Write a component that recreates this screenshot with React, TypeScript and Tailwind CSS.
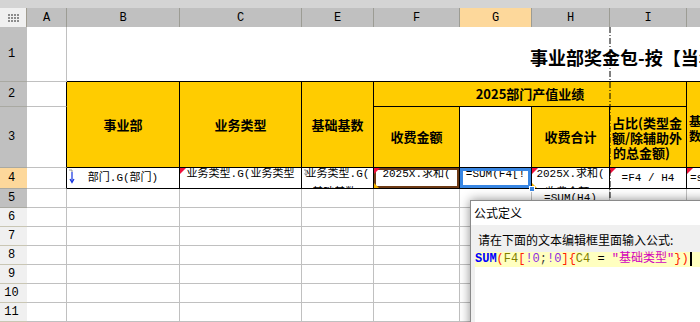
import React from "react";

const mono = "font-['Liberation_Mono','Noto_Sans_CJK_SC',monospace]";
const cjk = "font-['Noto_Sans_CJK_SC','Liberation_Sans',sans-serif]";

const headers = ["A", "B", "C", "E", "F", "G", "H", "I", "J"];

function RedMark() {
  return <span className="absolute left-0 top-0 w-0 h-0 border-t-[6px] border-r-[6px] border-t-[#f0103c] border-r-transparent" />;
}

function YellowMark() {
  return <span className="absolute left-0 bottom-0 w-0 h-0 border-b-[5px] border-r-[5px] border-b-[#f2b400] border-r-transparent" />;
}

function RowHead({ n, tone }: { n: number; tone: "gray" | "light" | "sel" }) {
  const bg = tone === "gray" ? "bg-[#c0c0c0] border-[#a9a9a2]" : tone === "sel" ? "bg-[#fdd89b] border-[#a9a9a2]" : "bg-[#f0f0f0] border-[#c9c6b4]";
  return (
    <div className={`border-b ${bg} flex items-center justify-center pr-[4px] text-[12px] text-black ${mono}`}>
      {n}
    </div>
  );
}

// a row-4 cell whose text wraps onto a second line that is mostly cut off
function Wrapped({ lines, children }: { lines: string[]; children?: React.ReactNode }) {
  return (
    <div className={`relative bg-white border-r border-b border-black overflow-hidden text-center text-[11px] whitespace-nowrap text-black ${mono}`}>
      {children}
      <div className="-mt-[3px] leading-[19px]">
        {lines.map((l, i) => (
          <div key={i}>{l}</div>
        ))}
      </div>
    </div>
  );
}

export default function App() {
  const yellow = `bg-[#ffcc00] border-r border-b border-black flex items-center justify-center font-bold text-[13px] text-black ${cjk}`;

  return (
    <div className="relative w-[700px] h-[322px] overflow-hidden bg-white">
      <div className="h-[8px] bg-[#d4d4d4]" />
      <div className="grid grid-cols-[27px_40px_113px_122px_72px_86px_72px_78px_77px_80px] grid-rows-[19px_55px_25px_61px_21px_19px_19px_19px_19px_19px_19px_19px]">
        {/* column headers */}
        <div className="bg-[#f0f0f0] border-r border-[#a09c90] flex items-center justify-center">
          <div className="grid grid-cols-4 gap-[1px]">
            {Array.from({ length: 12 }).map((_, i) => (
              <span key={i} className="w-[2px] h-[2px] bg-[#8c8c8c]" />
            ))}
          </div>
        </div>
        {headers.map((h) => (
          <div
            key={h}
            className={`border-r border-[#9c9c94] flex items-center justify-center text-[12px] text-black ${mono} ${
              h === "G" ? "bg-[#fdd89b]" : "bg-[#c0c0c0]"
            }`}
          >
            {h === "J" ? "" : h}
          </div>
        ))}

        {/* row 1 */}
        <RowHead n={1} tone="gray" />
        <div className="border-r border-b border-[#c0c0c0]" />
        <div className={`col-span-8 border-b border-black flex items-center pl-[463px] pt-[5px] whitespace-nowrap text-[18px] leading-none font-bold text-black overflow-hidden ${cjk}`}>
          事业部奖金包-按【当年】
        </div>

        {/* row 2 */}
        <RowHead n={2} tone="gray" />
        <div className="border-r border-b border-r-black border-b-[#c0c0c0]" />
        <div className={`row-span-2 ${yellow}`}>事业部</div>
        <div className={`row-span-2 ${yellow}`}>业务类型</div>
        <div className={`row-span-2 ${yellow}`}>基础基数</div>
        <div className={`col-span-4 ${yellow} pb-[1px]`}>2025部门产值业绩</div>
        <div className={`row-span-2 bg-[#ffcc00] border-b border-black overflow-hidden flex flex-col justify-center pl-[2px] pt-[6px] whitespace-nowrap font-bold text-[12px] leading-[15px] text-black ${cjk}`}>
          <div>基础基数</div>
          <div>数值比例</div>
        </div>

        {/* row 3 */}
        <RowHead n={3} tone="gray" />
        <div className="border-r border-b border-r-black border-b-[#c0c0c0]" />
        <div className={yellow}>收费金额</div>
        <div className="bg-white border-r border-b border-black" />
        <div className={yellow}>收费合计</div>
        <div className={`bg-[#ffcc00] border-r border-b border-black overflow-hidden flex flex-col justify-center pl-[2px] whitespace-nowrap font-bold text-[13px] leading-[15px] text-black ${cjk}`}>
          <div>占比(类型金</div>
          <div>额/除辅助外</div>
          <div className="pl-[1px]">的总金额)</div>
        </div>

        {/* row 4 */}
        <RowHead n={4} tone="sel" />
        <div className="border-r border-b border-r-black border-b-[#c0c0c0]" />
        <div className={`relative bg-white border-r border-b border-black flex items-center justify-center text-[11px] text-black ${mono}`}>
          <svg className="absolute left-[1px] top-[1px]" width="8" height="15" viewBox="0 0 8 15">
            <path d="M1 1 L4 1 L4 3" stroke="#909090" strokeWidth="1" fill="none" />
            <path d="M4 3 L4 13" stroke="#1030e0" strokeWidth="1.2" fill="none" />
            <path d="M2 10 L4 13.5 L6 10" stroke="#1030e0" strokeWidth="1.2" fill="none" />
          </svg>
          部门.G(部门)
        </div>
        <Wrapped lines={["业务类型.G(业务类型", ")"]}>
          <RedMark />
        </Wrapped>
        <Wrapped lines={["业务类型.G(", "基础基数)"]}>
          <svg className="absolute left-[1px] top-[1px]" width="6" height="8" viewBox="0 0 6 8">
            <path d="M1 1 L3 1 L3 6 M1.5 4.5 L3 6.5 L4.5 4.5" stroke="#8c8c8c" strokeWidth="1" fill="none" />
          </svg>
        </Wrapped>
        <Wrapped lines={["2025X.求和(", "收费金额)"]}>
          <span className="absolute inset-0 border-2 border-[#6e3b16]" />
          <RedMark />
          <YellowMark />
        </Wrapped>
        <Wrapped lines={["=SUM(F4[!", "0;!0]{C4"]}>
          <span className="absolute inset-0 border-[3px] border-[#3886e3]" />
        </Wrapped>
        <Wrapped lines={["2025X.求和(", "收费金额)"]}>
          <RedMark />
          <YellowMark />
        </Wrapped>
        <div className={`relative bg-white border-r border-b border-black flex items-center justify-center text-[11px] whitespace-nowrap text-black ${mono}`}>
          <RedMark />
          =F4 / H4
        </div>
        <div className={`relative bg-white border-b border-black flex items-center pl-[3px] text-[11px] whitespace-nowrap text-black overflow-hidden ${mono}`}>
          <RedMark />
          =sum(F4)/sum(H4)
        </div>

        {/* rows 5-11 */}
        {[5, 6, 7, 8, 9, 10, 11].map((n) => (
          <React.Fragment key={n}>
            <RowHead n={n} tone={n === 5 ? "gray" : "light"} />
            {headers.map((h) => (
              <div
                key={h}
                className={`border-r border-b border-[#c0c0c0] flex items-center justify-center text-[11px] whitespace-nowrap text-black ${mono}`}
              >
                {n === 5 && h === "H" ? "=SUM(H4)" : ""}
              </div>
            ))}
          </React.Fragment>
        ))}
      </div>

      {/* selection handle */}
      <span className="absolute left-[529px] top-[186px] w-[6px] h-[6px] bg-[#3886e3] border border-white" />

      {/* page break */}
      <svg className="absolute left-[609px] top-[27px]" width="2" height="175">
        <line x1="1" y1="0" x2="1" y2="175" stroke="#000" strokeWidth="1" strokeDasharray="6 2 1 2" />
      </svg>

      {/* formula dialog */}
      <div className={`absolute left-[470px] top-[200px] w-[250px] h-[140px] border border-[#8a8a8a] bg-[#f0f0f0] shadow-[0_0_10px_rgba(0,0,0,0.45)] text-black ${cjk}`}>
        <div className="h-[24px] bg-white flex items-center pl-[3px] text-[12px]">公式定义</div>
        <div className="pl-[7px] pt-[7px] text-[12px] leading-[16px] whitespace-nowrap">请在下面的文本编辑框里面输入公式:</div>
        <div className="ml-[4px] mt-[4px] h-[100px] bg-white">
          <div className={`h-[15px] bg-[#ffffc0] leading-[15px] whitespace-pre text-[12px] ${mono}`}>
            <span className="text-[#0000ff] font-bold">SUM</span>
            <span className="text-[#ff2000]">(</span>
            <span className="text-[#808000]">F4</span>
            <span className="text-[#ff2000]">[</span>
            <span className="text-[#8a2be2]">!0</span>
            <span className="text-[#404040]">;</span>
            <span className="text-[#8a2be2]">!0</span>
            <span className="text-[#ff2000]">]{"{"}</span>
            <span className="text-[#808000]">C4</span>
            <span className="text-black">{" = "}</span>
            <span className="text-[#d000c0]">"基础类型"</span>
            <span className="text-[#ff2000]">{"}"})</span>
            <span className="inline-block w-[2px] h-[14px] bg-black ml-[1px] align-middle" />
          </div>
        </div>
      </div>
    </div>
  );
}
